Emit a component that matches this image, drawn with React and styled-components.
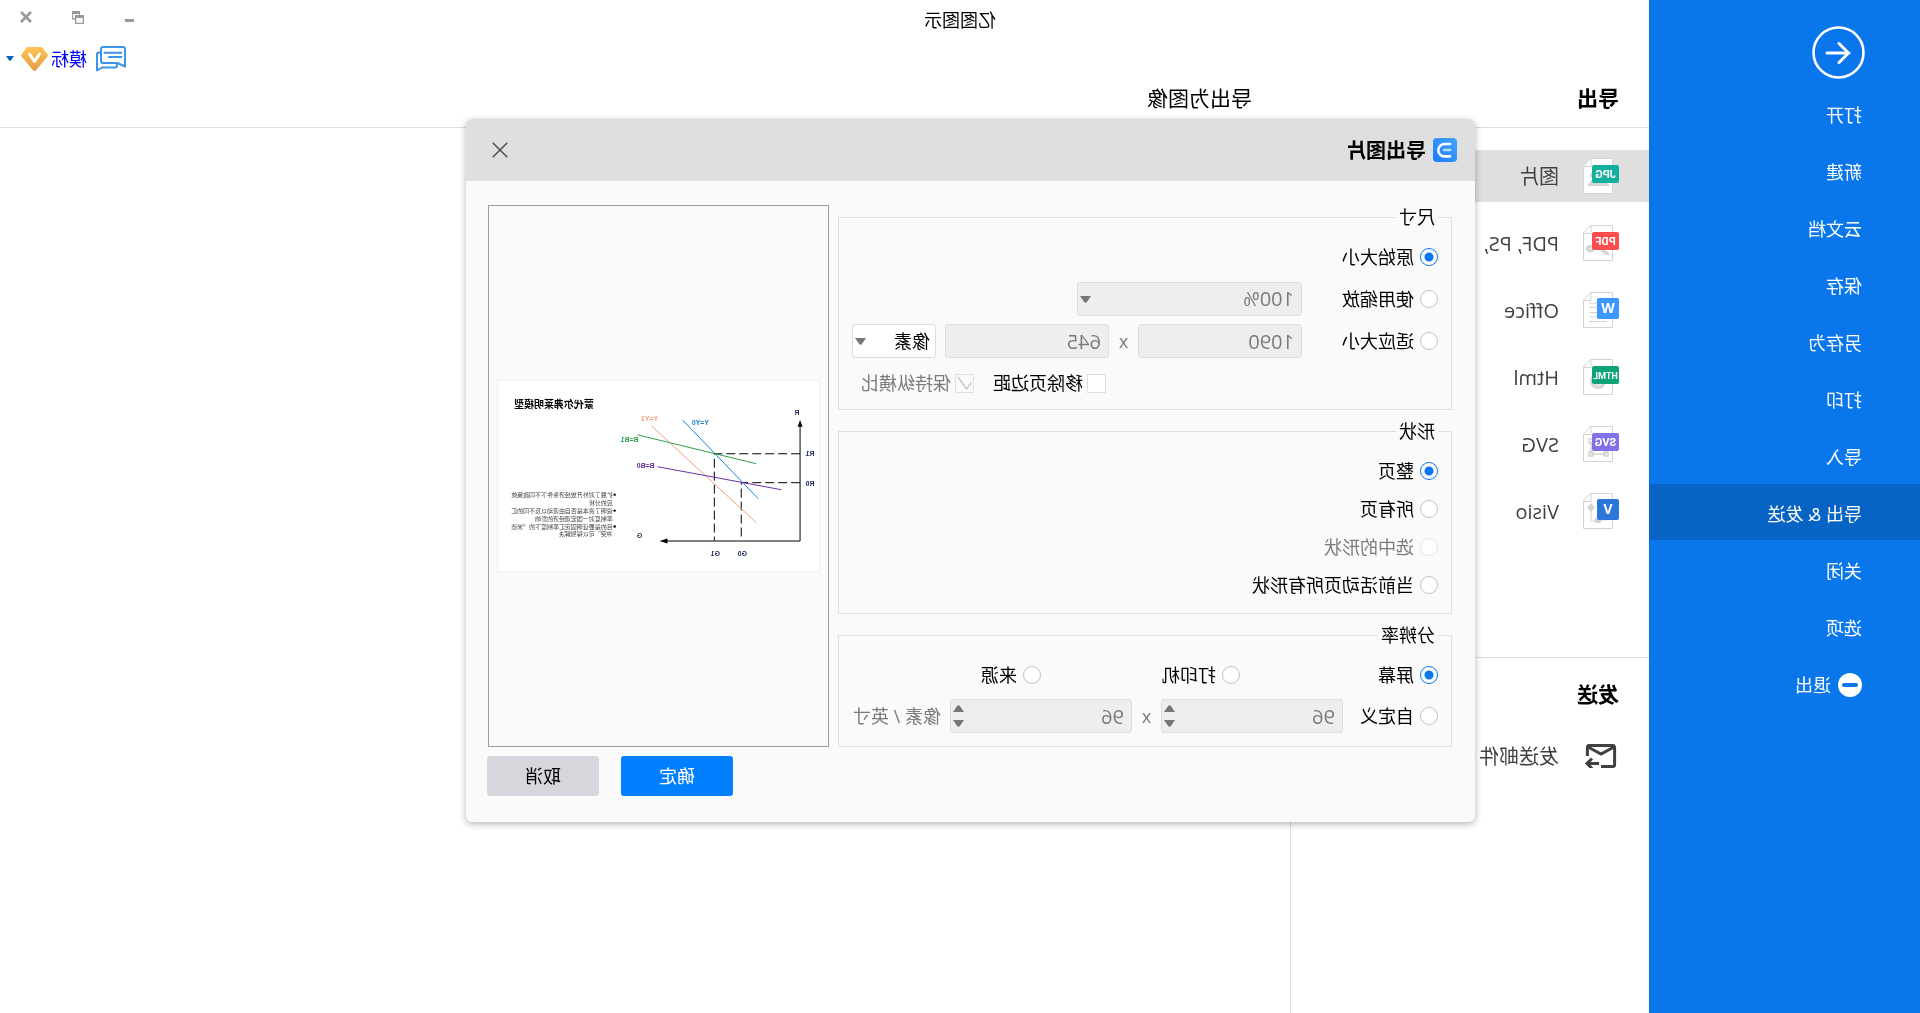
import React from 'react';
import styled, { createGlobalStyle } from 'styled-components';

const GlobalStyle = createGlobalStyle`
  * {
    box-sizing: border-box;
  }

  body {
    margin: 0;
    background: #fff;
  }

  body, button, input, select {
    font-family: "Open Sans", "Noto Sans CJK SC", sans-serif;
    font-size: 18px;
    line-height: 24px;
    color: #000;
  }

  button {
    padding: 0;
    border: 0;
    background: none;
  }
`;

// the whole window is flipped left to right
const Window = styled.div`
  position: relative;
  display: flex;
  min-height: 100vh;
  overflow: hidden;
  transform: scaleX(-1);
`;

// -------------------------------------------------------------------------------
// SIDEBAR
const Sidebar = styled.nav`
  display: flex;
  flex-direction: column;
  flex-shrink: 0;
  gap: 1px;
  width: 271px;
  padding-top: 26px;
  background: #0977eb;
`;

const BackButton = styled.button`
  display: flex;
  align-self: flex-start;
  margin: 0 0 5px 55px;
`;

const MenuItem = styled.button`
  display: flex;
  align-items: center;
  gap: 7px;
  height: 56px;
  padding: 4px 0 0 58px;
  color: #fff;
  background: ${({ $active }) => ($active ? '#0764c5' : 'transparent')};
`;

// -------------------------------------------------------------------------------
// MAIN AREA
const Main = styled.div`
  display: flex;
  flex: 1;
  flex-direction: column;
  min-width: 0;
`;

const TitleBar = styled.header`
  display: flex;
  align-items: center;
  height: 34px;
`;

const AppTitle = styled.div`
  flex: 1;
  padding: 6px 115px 0 0;
  text-align: center;
`;

const WindowButton = styled.button`
  display: flex;
  align-items: center;
  justify-content: center;
  width: 52px;
  height: 34px;
`;

const AccountBar = styled.div`
  display: flex;
  align-items: center;
  justify-content: flex-end;
  height: 48px;
  padding: 1px 6px 0 0;
`;

const IconButton = styled.button`
  display: flex;
  margin-right: ${({ $gap }) => $gap || 0}px;
`;

const UserName = styled.a`
  margin-right: 3px;
  color: #0000ff;
  text-decoration: none;
`;

const Headings = styled.div`
  display: flex;
  height: 46px;
  padding: 3px 0 0 30px;
  border-bottom: 1px solid #dfdfdf;
`;

const Heading = styled.h2`
  width: ${({ $wide }) => ($wide ? '367px' : 'auto')};
  margin: 0;
  font-size: 21px;
  line-height: 26px;
  font-weight: ${({ $bold }) => ($bold ? 700 : 400)};
`;

const Columns = styled.div`
  display: flex;
  flex: 1;
`;

const FormatPanel = styled.aside`
  width: 359px;
  border-right: 1px solid #dfdfdf;
`;

const FormatList = styled.div`
  display: flex;
  flex-direction: column;
  gap: 15px;
  height: 530px;
  padding-top: 22px;
  border-bottom: 1px solid #dfdfdf;
`;

const FormatItem = styled.button`
  display: flex;
  align-items: center;
  gap: 24px;
  width: 100%;
  height: 52px;
  padding-left: 30px;
  font-size: 20px;
  color: #404040;
  white-space: nowrap;
  background: ${({ $active }) => ($active ? '#dfdfdf' : 'transparent')};

  span {
    padding-top: 2px;
  }
`;

const SendSection = styled.section`
  padding-top: 23px;

  h2 {
    padding: 0 0 23px 30px;
  }
`;

// -------------------------------------------------------------------------------
// DIALOG
const Overlay = styled.div`
  position: absolute;
  inset: 0;
  display: flex;
  align-items: flex-start;
  justify-content: center;
  padding: 119px 21px 0 0;
`;

const Dialog = styled.section`
  width: 1009px;
  border-radius: 6px;
  background: #fafafa;
  box-shadow: 0 2px 7px rgba(0, 0, 0, 0.3);
`;

const DialogHeader = styled.header`
  display: flex;
  align-items: center;
  gap: 7px;
  height: 62px;
  padding: 0 26px 0 18px;
  border-radius: 6px 6px 0 0;
  background: #dfdfdf;
`;

const DialogTitle = styled.h1`
  flex: 1;
  margin: 0;
  padding-top: 2px;
  font-size: 20px;
  line-height: 24px;
`;

const DialogBody = styled.div`
  display: flex;
  gap: 9px;
  padding: 24px 22px 0 23px;
`;

const Groups = styled.form`
  display: flex;
  flex-direction: column;
  gap: 9px;
  width: 614px;
`;

const Group = styled.fieldset`
  display: flex;
  flex-direction: column;
  gap: ${({ $gap }) => $gap || 8}px;
  min-width: 0;
  margin: 0;
  padding: ${({ $pad }) => $pad};
  border: 1px solid #dfdfdf;
`;

const Legend = styled.legend`
  height: 24px;
  padding: 0 3px;
`;

const Row = styled.div`
  display: flex;
  align-items: center;
  justify-content: ${({ $end }) => ($end ? 'flex-end' : 'flex-start')};
  height: ${({ $short }) => ($short ? 30 : 34)}px;
  padding-right: ${({ $end }) => ($end ? 9 : 0)}px;
`;

const Choice = styled.label`
  display: flex;
  align-items: center;
  gap: 6px;
  width: ${({ $width }) => ($width ? `${$width}px` : 'auto')};
  color: ${({ $muted }) => ($muted ? '#7b7b7b' : '#000')};
`;

const Radio = styled.input.attrs({ type: 'radio' })`
  appearance: none;
  width: 18px;
  height: 18px;
  margin: 0;
  border: 1px solid #c4c4c4;
  border-radius: 50%;
  background: #fff;

  &:checked {
    border-color: #0977eb;
    background: radial-gradient(circle, #0977eb 4px, #fff 5px);
  }

  &:disabled {
    border-color: #e4e4e4;
  }
`;

const TickLabel = styled(Choice)`
  gap: 4px;
  margin-left: 19px;
`;

const TickBox = styled.span`
  display: grid;
  width: 19px;
  height: 19px;

  > * {
    grid-area: 1 / 1;
  }
`;

const Tick = styled.input.attrs({ type: 'checkbox' })`
  appearance: none;
  width: 19px;
  height: 19px;
  margin: 0;
  border: 1px solid #dfdfdf;
  background: #fff;

  &:disabled {
    background: #fafafa;
  }
`;

const Field = styled.span`
  display: flex;
  align-items: center;
  width: ${({ $width }) => $width}px;
  height: 34px;
  padding-right: 2px;
  border: 1px solid #dcdde0;
  border-radius: 3px;
  background: ${({ $off }) => ($off ? '#eee' : '#fff')};

  input, select {
    flex: 1;
    min-width: 0;
    height: 32px;
    padding: 0 0 0 ${({ $off }) => ($off ? 7 : 5)}px;
    border: 0;
    outline: 0;
    appearance: none;
    background: transparent;
    font-size: ${({ $off }) => ($off ? 20 : 18)}px;
    color: ${({ $off }) => ($off ? '#7b7b7b' : '#000')};
    opacity: 1;
  }

  svg {
    flex-shrink: 0;
    pointer-events: none;
  }
`;

const Stepper = styled.span`
  display: flex;
  flex-direction: column;
  gap: 8px;

  button {
    display: flex;
  }
`;

const Times = styled.span`
  width: 29px;
  text-align: center;
  color: #7b7b7b;
`;

const Unit = styled.span`
  margin-left: 9px;
  color: #7b7b7b;
  white-space: nowrap;
`;

const Preview = styled.div`
  display: flex;
  flex: 1;
  align-items: center;
  padding: 0 9px;
  border: 1px solid #9c9c9c;

  svg {
    width: 100%;
    background: #fff;
    outline: 1px solid #f1f1f1;
  }
`;

const DialogFooter = styled.footer`
  display: flex;
  justify-content: flex-end;
  gap: 22px;
  padding: 9px 21px 26px;
`;

const DialogButton = styled.button`
  width: 112px;
  height: 40px;
  border-radius: 3px;
  color: ${({ $primary }) => ($primary ? '#fff' : '#000')};
  background: ${({ $primary }) => ($primary ? '#007fff' : '#d5d7dc')};
`;

// -------------------------------------------------------------------------------
// ICONS
const BackIcon = () => (
  <svg width="53" height="53" viewBox="0 0 53 53" fill="none" stroke="#fff" strokeWidth="3">
    <circle cx="26.5" cy="26.5" r="25" strokeWidth="2.6" />
    <path d="M38 27H16M26 17.500L16.500 27L26 36.500" strokeLinecap="round" strokeLinejoin="round" />
  </svg>
);

const ExitIcon = () => (
  <svg width="24" height="24" viewBox="0 0 24 24">
    <circle cx="12" cy="12" r="12" fill="#fff" />
    <rect x="4" y="10" width="16" height="4" rx="2" fill="#0977eb" />
  </svg>
);

const MinimizeIcon = () => (
  <svg width="9" height="13" viewBox="0 0 9 13">
    <rect y="8" width="9" height="3" fill="#999" />
  </svg>
);

const RestoreIcon = () => (
  <svg width="12" height="13" viewBox="0 0 12 13" fill="#999">
    <path d="M4 0h8v8.500H9V7h2V3H5v1H4z" />
    <path fillRule="evenodd" d="M0 4h9v9H0zM1.300 7v4.700h6.400V7z" />
  </svg>
);

const CloseIcon = () => (
  <svg width="12" height="12" viewBox="0 0 12 12" stroke="#999" strokeWidth="2.600">
    <path d="M1 1L11 11M11 1L1 11" />
  </svg>
);

const ChatIcon = () => (
  <svg width="30" height="26" viewBox="0 0 30 26" fill="none" stroke="#3b93ec" strokeWidth="2" strokeLinejoin="round">
    <path d="M1 20.500V3a2 2 0 0 1 2-2h20a2 2 0 0 1 2 2v12a2 2 0 0 1-2 2H8.500z" />
    <path d="M25 6.500h2a2 2 0 0 1 2 2V24.500L24 21.500H11a2 2 0 0 1-2-2V17" />
    <path d="M4.500 6.700h17M4.500 11h12.500" strokeLinecap="round" />
  </svg>
);

const BadgeIcon = () => (
  <svg width="27" height="24" viewBox="0 0 27 24">
    <defs>
      <linearGradient id="gold" x1="0" y1="0" x2="0" y2="1">
        <stop offset="0" stopColor="#ffc552" />
        <stop offset="1" stopColor="#e39a45" />
      </linearGradient>
    </defs>
    <path d="M7 0h13q1 0 1.700 1L26.500 7.500q.8 1 0 2L15 23.200q-1.500 1.500-3 0L.5 9.500q-.8-1 0-2L5.300 1Q6 0 7 0z" fill="url(#gold)" />
    <path d="M8.500 7L13.500 14.500L18.500 7" fill="none" stroke="#fff" strokeWidth="3" strokeLinecap="round" strokeLinejoin="round" />
  </svg>
);

const DownIcon = ({ width = 11, height = 7, color = '#777', up }) => (
  <svg width={width} height={height} viewBox="0 0 11 7" preserveAspectRatio="none" fill={color}>
    <path d={up ? 'M0 7L4.500 .5h2L11 7z' : 'M0 0L4.500 6.500h2L11 0z'} />
  </svg>
);

const DialogCloseIcon = () => (
  <svg width="16" height="16" viewBox="0 0 16 16" stroke="#4f4f4f" strokeWidth="1.500">
    <path d="M.7 .7L15.300 15.300M15.300 .7L.7 15.300" />
  </svg>
);

const LogoIcon = () => (
  <svg width="24" height="24" viewBox="0 0 24 24">
    <defs>
      <linearGradient id="logo" x1="0" y1="0" x2="1" y2="1">
        <stop offset="0" stopColor="#45a6ff" />
        <stop offset="1" stopColor="#1a7bff" />
      </linearGradient>
    </defs>
    <rect width="24" height="24" rx="4" fill="url(#logo)" />
    <path d="M7 6h5.500a6.200 6.200 0 0 1 0 12.400H7" fill="none" stroke="#fff" strokeWidth="2.600" strokeLinecap="round" />
    <path d="M7 12h6" stroke="#b7dbff" strokeWidth="2.600" strokeLinecap="round" />
  </svg>
);

const MailIcon = () => (
  <svg width="36" height="24" viewBox="-3 0 36 24" fill="none" stroke="#404040" strokeWidth="3">
    <path d="M15 22.500H3.400a2 2 0 0 1-2-2V3.400a2 2 0 0 1 2-2H26.600a2 2 0 0 1 2 2V12" />
    <path d="M2 3L15 10L28 3" />
    <path d="M17 19.500H28.500M24 14.500L29 19.500L24 24.500" />
  </svg>
);

// page outline drawn behind every format badge
const FormatIcon = ({ label, color, square, children }) => (
  <svg width="36" height="36" viewBox="0 0 36 36">
    <path d="M6.500 .5H28.500L35.500 8V35.500H6.500z" fill="#fff" stroke="#d4d4d4" />
    <path d="M28 .5V8.500H35.500" fill="none" stroke="#d4d4d4" />
    {children}
    <rect y={square ? 6 : 7} width={square ? 22 : 27} height={square ? 21 : 18} rx="2" fill={color} />
    <text
      x={square ? 11 : 13.5}
      y={square ? 21 : 20}
      fill="#fff"
      fontFamily={square ? 'Open Sans' : 'Roboto'}
      fontSize={square ? 14 : label.length > 3 ? 9 : 11}
      fontWeight="700"
      textAnchor="middle"
    >
      {label}
    </text>
  </svg>
);

const formats = [
  {
    name: '图片',
    label: 'JPG',
    color: '#12b09e',
    active: true,
    art: <path d="M9 28L17 18L22 23L26 20L32 28zM26 14a3 3 0 1 1 0 6z" fill="#d4d4d4" />,
  },
  {
    name: 'PDF, PS,',
    label: 'PDF',
    color: '#ff4d4f',
    art: <path d="M10 29Q15 28 18 24T32 22M26 22a3 2.500 0 1 0 5 0" fill="none" stroke="#d4d4d4" strokeWidth="3" />,
  },
  {
    name: 'Office',
    label: 'W',
    color: '#3c98ff',
    square: true,
    art: <path d="M12 29.500H30M12 25H30M20 20.500H30M20 15.500H30M20 11H30" stroke="#d4d4d4" />,
  },
  {
    name: 'Html',
    label: 'HTML',
    color: '#0fa37a',
    art: <circle cx="21" cy="22" r="7" fill="#e0e0e0" stroke="#d4d4d4" strokeWidth="2" />,
  },
  {
    name: 'SVG',
    label: 'SVG',
    color: '#8171e8',
    art: (
      <path
        d="M13 16H28M13 28H28M13 16V28M28 16V28M11 26h4v4h-4zM26 26h4v4h-4zM26 13h4v4h-4z"
        fill="#fff"
        stroke="#d4d4d4"
        strokeWidth="1.500"
      />
    ),
  },
  {
    name: 'Visio',
    label: 'V',
    color: '#2b77d9',
    square: true,
    art: (
      <g fill="#d4d4d4">
        <path d="M28 10L32 14.500L28 19L24 14.500zM18 25h6v5h-6z" />
        <path d="M28 18V28H22M12 27H18" fill="none" stroke="#d4d4d4" />
      </g>
    ),
  },
];

// -------------------------------------------------------------------------------
// PREVIEW DRAWING
const axisLabels = [
  { text: 'R', x: 22, y: 34 },
  { text: 'R1', x: 9, y: 75 },
  { text: 'R0', x: 9, y: 105 },
  { text: 'G1', x: 104, y: 176 },
  { text: 'G0', x: 77, y: 176 },
  { text: 'G', x: 180, y: 158 },
  { text: 'Y=Y0', x: 119, y: 44, color: '#1583d8' },
  { text: 'Y=Y1', x: 170, y: 40, color: '#f2a07b' },
  { text: 'B=B1', x: 190, y: 61, color: '#2f9c46' },
  { text: 'B=B0', x: 174, y: 87, color: '#6b2fa8' },
];

const notes = [
  '扩展了对外开放经济条件下不同政策效',
  '应的分析',
  '说明了资本是否自由流动以及不同的汇',
  '率制度对一国宏观经济的影响',
  '目的是要证明固定汇率制度下的“米德',
  '冲突”可以得到解决',
];

const Diagram = () => (
  <svg viewBox="0 0 322 191" fontFamily='"Noto Sans CJK SC", sans-serif'>
    <text x="226" y="27" fontSize="10" fontWeight="700">蒙代尔弗莱明模型</text>
    <g fill="none" stroke="#000">
      <path d="M19 42V160.500H156" />
      <path d="M19 73H105V160M19 102H78V160" strokeDasharray="9 4" />
    </g>
    <path d="M19 39L21.500 46H16.500zM160 160.500L152 158V163z" />
    <g fill="none">
      <path d="M137 39L61 118" stroke="#1583d8" />
      <path d="M168 45L63 142" stroke="#f2a07b" />
      <path d="M182 54L63 83" stroke="#2f9c46" />
      <path d="M162 86L38 109" stroke="#6b2fa8" />
    </g>
    {axisLabels.map(({ text, x, y, color = '#1f2a5c' }) => (
      <text key={text} x={x} y={y} fontSize="7" fontWeight="700" textAnchor="middle" fill={color} fontFamily="Liberation Sans">
        {text}
      </text>
    ))}
    {notes.map((line, i) => (
      <g key={line}>
        {i % 2 === 0 && <circle cx="205" cy={114 + i * 8} r="1.200" />}
        <text x="207" y={116 + i * 8} fontSize="6" fill="#444">{line}</text>
      </g>
    ))}
  </svg>
);

// -------------------------------------------------------------------------------
const menuTop = ['打开', '新建', '云文档', '保存', '另存为', '打印', '导入', '导出 & 发送', '关闭', '选项'];

const RadioChoice = ({ text, width, disabled, ...rest }) => (
  <Choice $width={width} $muted={disabled}>
    <Radio disabled={disabled} {...rest} />
    {text}
  </Choice>
);

const Spin = ({ label }) => (
  <Field $width={182} $off>
    <input aria-label={label} defaultValue="96" disabled />
    <Stepper>
      <button type="button" aria-label="增加" disabled><DownIcon up /></button>
      <button type="button" aria-label="减少" disabled><DownIcon /></button>
    </Stepper>
  </Field>
);

const ExportDialog = () => (
  <Overlay>
    <Dialog role="dialog" aria-label="导出图片">
      <DialogHeader>
        <LogoIcon />
        <DialogTitle>导出图片</DialogTitle>
        <IconButton aria-label="关闭"><DialogCloseIcon /></IconButton>
      </DialogHeader>
      <DialogBody>
        <Groups>
          <Group $pad="11px 13px 9px">
            <Legend>尺寸</Legend>
            <Row><RadioChoice name="size" text="原始大小" defaultChecked /></Row>
            <Row>
              <RadioChoice name="size" text="使用缩放" width={136} />
              <Field $width={225} $off>
                <select aria-label="缩放" disabled><option>100%</option></select>
                <DownIcon />
              </Field>
            </Row>
            <Row>
              <RadioChoice name="size" text="适应大小" width={136} />
              <Field $width={164} $off><input aria-label="宽" defaultValue="1090" disabled /></Field>
              <Times>x</Times>
              <Field $width={164} $off><input aria-label="高" defaultValue="645" disabled /></Field>
              <Unit />
              <Field $width={84}>
                <select aria-label="单位"><option>像素</option></select>
                <DownIcon />
              </Field>
            </Row>
            <Row $end>
              <TickLabel><Tick />移除页边距</TickLabel>
              <TickLabel $muted>
                <TickBox>
                  <Tick defaultChecked disabled />
                  <svg width="19" height="19" viewBox="0 0 19 19" fill="none" stroke="#c8c8c8" strokeWidth="1.500">
                    <path d="M3 9L7.500 15L16 3" />
                  </svg>
                </TickBox>
                保持纵横比
              </TickLabel>
            </Row>
          </Group>
          <Group $pad="13px">
            <Legend>形状</Legend>
            <Row $short><RadioChoice name="shape" text="整页" defaultChecked /></Row>
            <Row $short><RadioChoice name="shape" text="所有页" /></Row>
            <Row $short><RadioChoice name="shape" text="选中的形状" disabled /></Row>
            <Row $short><RadioChoice name="shape" text="当前活动页所有形状" /></Row>
          </Group>
          <Group $pad="11px 13px 13px" $gap={7}>
            <Legend>分辨率</Legend>
            <Row>
              <RadioChoice name="dpi" text="屏幕" width={198} defaultChecked />
              <RadioChoice name="dpi" text="打印机" width={199} />
              <RadioChoice name="dpi" text="来源" />
            </Row>
            <Row>
              <RadioChoice name="dpi" text="自定义" width={95} />
              <Spin label="水平分辨率" />
              <Times>x</Times>
              <Spin label="垂直分辨率" />
              <Unit>像素 / 英寸</Unit>
            </Row>
          </Group>
        </Groups>
        <Preview><Diagram /></Preview>
      </DialogBody>
      <DialogFooter>
        <DialogButton $primary>确定</DialogButton>
        <DialogButton>取消</DialogButton>
      </DialogFooter>
    </Dialog>
  </Overlay>
);

const App = () => (
  <>
    <GlobalStyle />
    <Window>
      <Sidebar>
        <BackButton aria-label="返回"><BackIcon /></BackButton>
        {menuTop.map((item) => (
          <MenuItem key={item} $active={item === '导出 & 发送'}>{item}</MenuItem>
        ))}
        <MenuItem><ExitIcon />退出</MenuItem>
      </Sidebar>
      <Main>
        <TitleBar>
          <AppTitle>亿图图示</AppTitle>
          <WindowButton aria-label="最小化"><MinimizeIcon /></WindowButton>
          <WindowButton aria-label="还原"><RestoreIcon /></WindowButton>
          <WindowButton aria-label="关闭"><CloseIcon /></WindowButton>
        </TitleBar>
        <AccountBar>
          <IconButton $gap={9} aria-label="消息"><ChatIcon /></IconButton>
          <UserName href="#">模标</UserName>
          <IconButton $gap={7} aria-label="会员"><BadgeIcon /></IconButton>
          <IconButton aria-label="更多"><DownIcon width={8} height={5} color="#0f62b8" /></IconButton>
        </AccountBar>
        <Headings>
          <Heading $bold $wide>导出</Heading>
          <Heading>导出为图像</Heading>
        </Headings>
        <Columns>
          <FormatPanel>
            <FormatList>
              {formats.map(({ name, active, art, ...icon }) => (
                <FormatItem key={name} $active={active}>
                  <FormatIcon {...icon}>{art}</FormatIcon>
                  <span>{name}</span>
                </FormatItem>
              ))}
            </FormatList>
            <SendSection>
              <Heading $bold>发送</Heading>
              <FormatItem><MailIcon /><span>发送邮件</span></FormatItem>
            </SendSection>
          </FormatPanel>
        </Columns>
      </Main>
      <ExportDialog />
    </Window>
  </>
);

export default App;
